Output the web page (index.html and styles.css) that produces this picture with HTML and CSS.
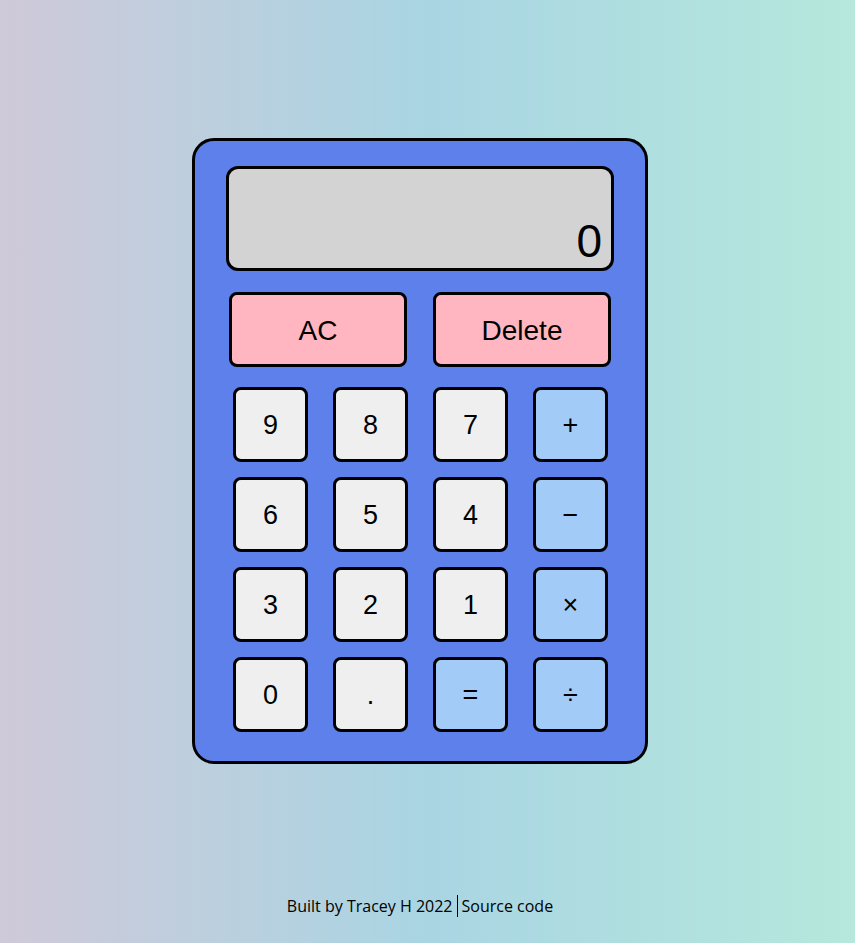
FILE: index.html
```
<!DOCTYPE html>
<html lang="en">
<head>
<meta charset="utf-8">
<title>Calculator</title>
<link rel="stylesheet" href="styles.css">
</head>
<body>
<main class="calculator">
  <div class="display"><span class="display-value">0</span></div>
  <div class="top-keys">
    <button class="key key-wide">AC</button>
    <button class="key key-wide">Delete</button>
  </div>
  <div class="keys">
    <button class="key">9</button>
    <button class="key">8</button>
    <button class="key">7</button>
    <button class="key key-op">+</button>
    <button class="key">6</button>
    <button class="key">5</button>
    <button class="key">4</button>
    <button class="key key-op">−</button>
    <button class="key">3</button>
    <button class="key">2</button>
    <button class="key">1</button>
    <button class="key key-op">×</button>
    <button class="key">0</button>
    <button class="key">.</button>
    <button class="key key-op">=</button>
    <button class="key key-op">÷</button>
  </div>
</main>
<footer class="footer">
  <span class="credit">Built by Tracey H 2022</span><a class="source" href="#">Source code</a>
</footer>
</body>
</html>
```
FILE: styles.css
```
* { box-sizing: border-box; }
html, body { margin: 0; padding: 0; }
body {
  height: 943px;
  background: linear-gradient(to right, #cfc9d9 0%, #a9d5e3 50%, #b6e8dc 100%);
  font-family: "Liberation Sans", Arial, sans-serif;
  display: flex;
  flex-direction: column;
  align-items: center;
  padding-right: 15px;
}
.calculator {
  margin-top: 138px;
  width: 456px;
  height: 626px;
  background: #5e80ea;
  border: 3px solid #000;
  border-radius: 22px;
  padding: 25px 31px 29px;
}
.display {
  height: 105px;
  background: #d3d3d3;
  border: 3px solid #000;
  border-radius: 12px;
  display: flex;
  align-items: flex-end;
  justify-content: flex-end;
  padding: 0 9px 1px;
}
.display-value {
  font-size: 46px;
  line-height: 1.1;
  color: #000;
}
.top-keys {
  margin-top: 21px;
  display: grid;
  grid-template-columns: 1fr 1fr;
  column-gap: 26px;
  padding: 0 3px;
}
.keys {
  margin-top: 20px;
  display: grid;
  grid-template-columns: repeat(4, 75px);
  grid-auto-rows: 75px;
  column-gap: 25px;
  row-gap: 15px;
  padding: 0 6px 0 7px;
}
.key {
  height: 75px;
  border: 3px solid #000;
  border-radius: 8px;
  background: #efefef;
  font-family: "Liberation Sans", Arial, sans-serif;
  font-size: 27px;
  color: #000;
  padding: 2px 0 0;
}
.key-wide {
  background: #ffb6c1;
  font-size: 28px;
}
.key-op {
  background: #a3cbf8;
}
.footer {
  margin-top: 131px;
  font-family: "Open Sans", sans-serif;
  font-size: 16px;
  line-height: 22px;
  color: #000;
  display: flex;
}
.credit { padding-right: 4px; }
.source {
  color: #000;
  text-decoration: none;
  border-left: 1px solid #000;
  padding-left: 4px;
}
```
